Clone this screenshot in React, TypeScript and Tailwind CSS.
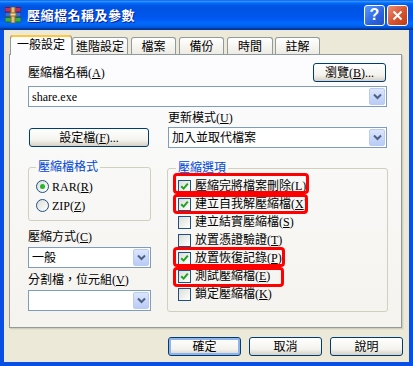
import type { ReactNode } from 'react';

function Key({ k }: { k: string }) {
	return (
		<>
			(<span className="underline underline-offset-1">{k}</span>)
		</>
	);
}

function Chevron() {
	return (
		<svg width="9" height="7" viewBox="0 0 9 7">
			<path d="M1 1.5 L4.5 5 L8 1.5" fill="none" stroke="#4D6185" strokeWidth="2" />
		</svg>
	);
}

function Combo({ value, className = '' }: { value?: string; className?: string }) {
	return (
		<div className={`flex h-[21px] items-center border border-[#7F9DB9] bg-white pl-[3px] pr-px ${className}`}>
			<span className="flex-1 leading-[14px]">{value}</span>
			<div className="flex h-[17px] w-[16px] items-center justify-center rounded-[2px] border border-[#BACBF3] bg-[linear-gradient(#DCE6FC,#B9CBF7)]">
				<Chevron />
			</div>
		</div>
	);
}

function Btn({ children, className = '', main = false }: { children: ReactNode; className?: string; main?: boolean }) {
	return (
		<div
			className={`flex h-[19px] items-center justify-center rounded-[3px] border border-[#003C74] bg-[linear-gradient(#FFFFFF,#F4F3EE_65%,#D6D0C5)] leading-[14px] ${
				main ? 'shadow-[inset_0_0_0_2px_#8FB3EC]' : ''
			} ${className}`}
		>
			{children}
		</div>
	);
}

function Check({ on }: { on: boolean }) {
	return (
		<div className="flex h-[13px] w-[13px] shrink-0 items-center justify-center border border-[#1C5180] bg-[linear-gradient(135deg,#DCDCD7,#FFFFFF)]">
			{on && (
				<svg width="9" height="9" viewBox="0 0 9 9">
					<path d="M1.2 4.2 L3.6 6.6 L7.8 1.6" fill="none" stroke="#21A121" strokeWidth="2" />
				</svg>
			)}
		</div>
	);
}

function Radio({ on }: { on: boolean }) {
	return (
		<div className="flex h-[13px] w-[13px] shrink-0 items-center justify-center rounded-full border border-[#1C5180] bg-[linear-gradient(135deg,#DCDCD7,#FFFFFF)]">
			{on && <div className="h-[5px] w-[5px] rounded-full bg-[#2AB52A]" />}
		</div>
	);
}

const options = [
	{ label: '壓縮完將檔案刪除', k: 'L', on: true },
	{ label: '建立自我解壓縮檔', k: 'X', on: true },
	{ label: '建立結實壓縮檔', k: 'S', on: false },
	{ label: '放置憑證驗證', k: 'T', on: false },
	{ label: '放置恢復記錄', k: 'P', on: true },
	{ label: '測試壓縮檔', k: 'E', on: true },
	{ label: '鎖定壓縮檔', k: 'K', on: false },
];

const tabs = [
	{ label: '進階設定', w: 'w-[56px] ml-0' },
	{ label: '檔案', w: 'w-[45px] ml-[3px]' },
	{ label: '備份', w: 'w-[45px] ml-[3px]' },
	{ label: '時間', w: 'w-[46px] ml-[3px]' },
	{ label: '註解', w: 'w-[45px] ml-[2px]' },
];

export default function App() {
	return (
		<div className="flex h-[366px] w-[413px] flex-col bg-[#0A4FE4] text-[12px] leading-[14px] text-black [font-family:'Liberation_Serif','Noto_Sans_CJK_TC',serif]">
			{/* title bar */}
			<div className="flex h-[30px] shrink-0 items-center bg-[linear-gradient(#0058EE_0%,#3593FF_4%,#288EFF_6%,#127DFF_8%,#036FFC_10%,#0262EE_14%,#0057E5_20%,#0054E3_24%,#0055EB_56%,#005BF5_66%,#026AFE_76%,#0062EF_86%,#0052D6_92%,#0040AB_94%,#003092_100%)] pl-[5px] pr-[5px]">
				<svg width="16" height="16" viewBox="0 0 16 16" className="mb-px">
					<rect x="0" y="0.5" width="16" height="4.5" fill="#B8305C" stroke="#6A1A48" strokeWidth="1" />
					<rect x="0" y="5.5" width="16" height="4.5" fill="#3A6CE0" stroke="#1A3A90" strokeWidth="1" />
					<rect x="0" y="10.5" width="16" height="4.5" fill="#3CAE48" stroke="#1A6A28" strokeWidth="1" />
					<rect x="6" y="0" width="4" height="16" fill="#E2BE78" stroke="#8A6A30" strokeWidth="1" />
					<rect x="5" y="6" width="6" height="3" fill="#F4DCA0" stroke="#8A6A30" strokeWidth="1" />
				</svg>
				<div className="ml-[6px] flex-1 text-[13px] font-bold tracking-[0.5px] text-white [font-family:'Noto_Sans_CJK_TC',sans-serif] [text-shadow:1px_1px_0_#0A1E8C]">
					壓縮檔名稱及參數
				</div>
				<div className="flex h-[21px] w-[21px] items-center justify-center rounded-[3px] border border-white bg-[linear-gradient(135deg,#5A9AFB,#2A63E0_60%,#2452C8)] text-[16px] font-bold leading-none text-white [font-family:'Liberation_Sans',sans-serif]">
					?
				</div>
				<div className="ml-[2px] flex h-[21px] w-[21px] items-center justify-center rounded-[3px] border border-white bg-[linear-gradient(135deg,#EC8E72,#D5532F_55%,#C23A18)]">
					<svg width="11" height="11" viewBox="0 0 11 11">
						<path d="M1.5 1.5 L9.5 9.5 M9.5 1.5 L1.5 9.5" stroke="white" strokeWidth="2" />
					</svg>
				</div>
			</div>

			{/* body */}
			<div className="mx-[4px] mb-[4px] flex flex-1 flex-col bg-[#ECE9D8] pt-[5px]">
				{/* tabs */}
				<div className="ml-[6px] flex h-[19px] items-end">
					<div className="relative z-10 -mb-px flex h-[20px] w-[62px] items-start justify-center rounded-t-[3px] border-x border-[#919B9C] bg-[#FCFCFE] pt-[3px] shadow-[inset_0_2px_0_#FFC83C,inset_0_1px_0_#E68B2C]">
						一般設定
					</div>
					{tabs.map((t) => (
						<div
							key={t.label}
							className={`flex h-[17px] items-center justify-center rounded-t-[3px] border border-b-0 border-[#919B9C] bg-[linear-gradient(#FFFFFF,#F4F3EE_60%,#ECEBE6)] pt-px ${t.w}`}
						>
							{t.label}
						</div>
					))}
				</div>

				{/* panel */}
				<div className="ml-[5px] h-[274px] w-[393px] border border-[#919B9C] bg-[linear-gradient(#FCFCFE,#F4F3EE)] pl-[18px] pt-[8px] shadow-[1px_1px_0_#D0CEBF,2px_2px_0_#E3E0D0]">
					<div className="flex h-[19px] w-[359px] items-center justify-between">
						<span>
							壓縮檔名稱<Key k="A" />
						</span>
						<Btn className="mr-px w-[73px]">
							瀏覽<Key k="B" />...
						</Btn>
					</div>
					<Combo value="share.exe" className="mt-[4px] w-[359px]" />

					<div className="flex">
						{/* left column */}
						<div className="flex w-[123px] flex-col">
							<Btn className="ml-px mt-[21px] w-[120px]">
								設定檔<Key k="F" />...
							</Btn>
							<div className="relative mt-[20px] h-[54px] rounded-[3px] border border-[#D0D0BF] pl-[7px] pt-[9px]">
								<span className="absolute -top-[8px] left-[7px] bg-[#F9F9F8] px-[2px] text-[#0046D5]">壓縮檔格式</span>
								<div className="flex h-[19px] items-center gap-[3px]">
									<Radio on />
									<span>
										RAR<Key k="R" />
									</span>
								</div>
								<div className="flex h-[19px] items-center gap-[3px]">
									<Radio on={false} />
									<span>
										ZIP<Key k="Z" />
									</span>
								</div>
							</div>
							<div className="mt-[9px] h-[14px]">
								壓縮方式<Key k="C" />
							</div>
							<Combo value="一般" className="mt-[3px] w-[123px]" />
							<div className="mt-[5px] h-[14px]">
								分割檔，位元組<Key k="V" />
							</div>
							<Combo className="mt-[3px] w-[123px]" />
						</div>

						{/* right column */}
						<div className="ml-[16px] flex w-[221px] flex-col">
							<div className="ml-px mt-[4px] h-[14px]">
								更新模式<Key k="U" />
							</div>
							<Combo value="加入並取代檔案" className="ml-px mt-[2px] w-[219px]" />
							<div className="relative mt-[20px] rounded-[3px] border border-[#D0D0BF] pb-[8px] pl-[10px] pt-[8px]">
								<span className="absolute -top-[8px] left-[8px] bg-[#F9F9F8] px-[2px] text-[#0046D5]">壓縮選項</span>
								{options.map((o) => (
									<div key={o.k} className="flex h-[18px] items-center gap-[4px]">
										<Check on={o.on} />
										<span>
											{o.label}
											<Key k={o.k} />
										</span>
									</div>
								))}
								<div className="absolute left-[5px] top-[4px] h-[21px] w-[136px] rounded-[4px] border-[3px] border-[#FF0000]" />
								<div className="absolute left-[5px] top-[25px] h-[20px] w-[135px] rounded-[4px] border-[3px] border-[#FF0000]" />
								<div className="absolute left-[5px] top-[78px] h-[20px] w-[112px] rounded-[4px] border-[3px] border-[#FF0000]" />
								<div className="absolute left-[5px] top-[98px] h-[20px] w-[111px] rounded-[4px] border-[3px] border-[#FF0000]" />
							</div>
						</div>
					</div>
				</div>

				{/* bottom buttons */}
				<div className="mt-[9px] flex justify-end gap-[8px] pr-[6px]">
					<Btn main className="w-[73px]">
						確定
					</Btn>
					<Btn className="w-[73px]">取消</Btn>
					<Btn className="w-[73px]">說明</Btn>
				</div>
			</div>
		</div>
	);
}
